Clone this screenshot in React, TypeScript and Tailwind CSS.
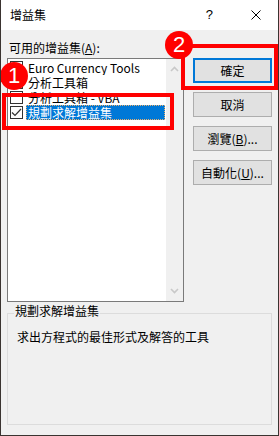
import React from "react";

const items = [
  { label: "Euro Currency Tools", checked: false },
  { label: "分析工具箱", checked: false },
  { label: "分析工具箱 - VBA", checked: false },
  { label: "規劃求解增益集", checked: true, selected: true },
];

function Chevron({ down }: { down?: boolean }) {
  return (
    <svg width="9" height="6" viewBox="0 0 9 6">
      <path
        d={down ? "M1 1 L4.5 4.5 L8 1" : "M1 5 L4.5 1.5 L8 5"}
        fill="none"
        stroke="#c8c8c8"
        strokeWidth="1.6"
      />
    </svg>
  );
}

function Checkbox({ checked }: { checked: boolean }) {
  return (
    <div className="w-[13px] h-[13px] border border-[#333] bg-white flex items-center justify-center shrink-0">
      {checked && (
        <svg width="11" height="9" viewBox="0 0 11 9">
          <path d="M1 4.5 L4 7.5 L10 1" fill="none" stroke="#333" strokeWidth="1.2" />
        </svg>
      )}
    </div>
  );
}

function Button({ children, focused }: { children: React.ReactNode; focused?: boolean }) {
  return (
    <div
      className={
        focused
          ? "h-[25px] w-[79px] border-2 border-[#0078d7] bg-[#e1e1e1] flex items-center justify-center"
          : "h-[25px] w-[79px] border border-[#adadad] bg-[#e1e1e1] flex items-center justify-center"
      }
    >
      {children}
    </div>
  );
}

export default function App() {
  return (
    <div
      className="relative w-[279px] h-[436px] bg-[#f0f0f0] border-x border-b border-[#3a3330] text-[12px] text-black overflow-hidden"
      style={{ fontFamily: '"Noto Sans CJK TC", "Liberation Sans", sans-serif' }}
    >
      {/* title bar */}
      <div className="h-[30px] bg-white flex items-center pl-[9px] pr-[17px]">
        <span className="flex-1">增益集</span>
        <span className="mr-[38px] text-[13px]" style={{ fontFamily: '"Liberation Sans", sans-serif' }}>
          ?
        </span>
        <svg width="10" height="10" viewBox="0 0 10 10">
          <path d="M0.5 0.5 L9.5 9.5 M9.5 0.5 L0.5 9.5" stroke="#000" strokeWidth="1" />
        </svg>
      </div>

      <div className="flex pl-[6px]">
        {/* left column */}
        <div className="w-[177px]">
          <div className="h-[28px] flex items-end pb-[4px] pl-[2px] leading-none">
            可用的增益集(<span className="underline">A</span>):
          </div>
          <div className="h-[244px] border border-[#7a7a7a] bg-white flex">
            <div className="flex-1 pt-[1px]">
              {items.map((it) => (
                <div key={it.label} className="h-[15px] flex items-center pl-[2px] gap-[3px] overflow-hidden">
                  <Checkbox checked={it.checked} />
                  <span
                    className={
                      it.selected
                        ? "h-[15px] flex-1 flex items-center pl-[1px] bg-[#0078d7] text-white border border-dotted border-[#e8b070] leading-none mr-[1px]"
                        : "h-[15px] flex items-center pl-[2px] leading-none"
                    }
                  >
                    {it.label}
                  </span>
                </div>
              ))}
            </div>
            <div className="w-[17px] bg-[#f0f0f0] flex flex-col items-center justify-between py-[7px]">
              <Chevron />
              <Chevron down />
            </div>
          </div>
        </div>

        {/* right column */}
        <div className="ml-[9px] pt-[28px] flex flex-col gap-[9px]">
          <Button focused>確定</Button>
          <Button>取消</Button>
          <Button>
            瀏覽(<span className="underline">B</span>)...
          </Button>
          <Button>
            自動化(<span className="underline">U</span>)...
          </Button>
        </div>
      </div>

      {/* group box */}
      <div className="relative mx-[6px] mt-[11px] h-[112px] border border-[#dcdcdc]">
        <span className="absolute -top-[9px] left-[6px] bg-[#f0f0f0] leading-none px-[1px]">規劃求解增益集</span>
        <div className="pl-[9px] pt-[17px] leading-none">求出方程式的最佳形式及解答的工具</div>
      </div>

      {/* callouts */}
      <div className="absolute left-[1px] top-[93px] w-[172px] h-[37px] border-[4px] border-[#ff0000]" />
      <div className="absolute left-[180px] top-[44px] w-[97px] h-[46px] border-[4px] border-[#ff0000]" />
      <div
        className="absolute -left-px top-[62px] w-[28px] h-[28px] rounded-full bg-[#ff0000] text-white text-[22px] flex items-center justify-center leading-none"
        style={{ fontFamily: '"Liberation Sans", sans-serif' }}
      >
        1
      </div>
      <div
        className="absolute left-[164px] top-[31px] w-[28px] h-[28px] rounded-full bg-[#ff0000] text-white text-[22px] flex items-center justify-center leading-none"
        style={{ fontFamily: '"Liberation Sans", sans-serif' }}
      >
        2
      </div>
    </div>
  );
}
